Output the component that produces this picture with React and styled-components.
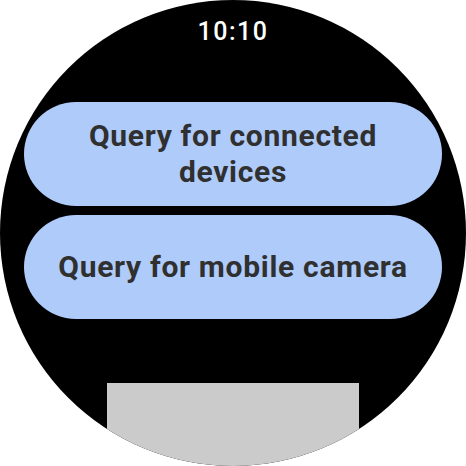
import React from "react";
import styled, { createGlobalStyle } from "styled-components";

const GlobalStyle = createGlobalStyle`
  html, body {
    margin: 0;
    padding: 0;
    background: #ffffff;
  }
  body {
    font-family: Roboto, "Noto Sans", sans-serif;
  }
`;

const Watch = styled.main`
  width: 466px;
  height: 466px;
  border-radius: 50%;
  background: #000000;
  overflow: hidden;
  display: flex;
  flex-direction: column;
  align-items: center;
  padding-top: 18px;
  box-sizing: border-box;
`;

const Time = styled.div`
  color: #ffffff;
  font-size: 25px;
  font-weight: 500;
  line-height: 28px;
  letter-spacing: 1.5px;
`;

const List = styled.div`
  margin-top: 56px;
  display: flex;
  flex-direction: column;
  gap: 9px;
`;

const Chip = styled.button`
  width: 418px;
  height: 104px;
  border: none;
  border-radius: 52px;
  background: #aecbfa;
  color: #303030;
  font-family: Roboto, sans-serif;
  font-size: 30px;
  font-weight: 700;
  line-height: 36px;
  letter-spacing: 0.7px;
  padding: 0 30px;
  text-align: center;
`;

const Placeholder = styled.div`
  margin-top: 64px;
  width: 252px;
  flex: 1;
  background: #cbcbcb;
`;

const App = () => {
  return (
    <>
      <GlobalStyle />
      <Watch>
        <Time>10:10</Time>
        <List>
          <Chip>Query for connected devices</Chip>
          <Chip>Query for mobile camera</Chip>
        </List>
        <Placeholder />
      </Watch>
    </>
  );
};

export default App;
